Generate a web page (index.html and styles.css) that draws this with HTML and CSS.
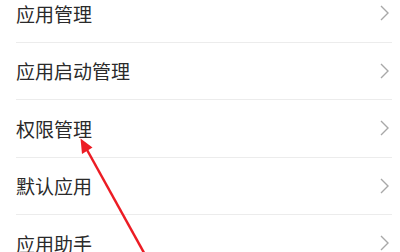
FILE: index.html
```html
<!DOCTYPE html>
<html lang="zh-CN">
<head>
<meta charset="utf-8">
<link rel="stylesheet" href="styles.css">
</head>
<body>
<ul class="list">
  <li class="row"><div class="row-inner"><span class="label">应用管理</span><svg class="chev" viewBox="0 0 9 16" width="9" height="16"><path d="M1 1 L8 8 L1 15" /></svg></div></li>
  <li class="row"><div class="row-inner"><span class="label">应用启动管理</span><svg class="chev" viewBox="0 0 9 16" width="9" height="16"><path d="M1 1 L8 8 L1 15" /></svg></div></li>
  <li class="row"><div class="row-inner"><span class="label">权限管理</span><svg class="chev" viewBox="0 0 9 16" width="9" height="16"><path d="M1 1 L8 8 L1 15" /></svg></div></li>
  <li class="row"><div class="row-inner"><span class="label">默认应用</span><svg class="chev" viewBox="0 0 9 16" width="9" height="16"><path d="M1 1 L8 8 L1 15" /></svg></div></li>
  <li class="row"><div class="row-inner"><span class="label">应用助手</span><svg class="chev" viewBox="0 0 9 16" width="9" height="16"><path d="M1 1 L8 8 L1 15" /></svg></div></li>
</ul>
<svg class="arrow" width="400" height="252" viewBox="0 0 400 252">
  <line x1="86" y1="148" x2="148" y2="260" />
  <polygon points="80.5,138.5 92.5,147.5 82,154" />
</svg>
</body>
</html>
```
FILE: styles.css
```css
html, body {
  margin: 0;
  padding: 0;
  background: #ffffff;
  width: 400px;
  height: 252px;
  overflow: hidden;
}
body {
  position: relative;
  font-family: "Noto Sans CJK SC", "Noto Sans", sans-serif;
}
.list {
  list-style: none;
  margin: -15px 0 0 0;
  padding: 0;
}
.row {
  padding-left: 16px;
  padding-right: 8px;
}
.row-inner {
  height: 57.5px;
  box-sizing: border-box;
  border-bottom: 1px solid #ececec;
  display: flex;
  align-items: center;
  justify-content: space-between;
  padding-right: 3px;
}
.label {
  font-size: 19px;
  color: #2a2a2a;
  line-height: 1;
}
.chev {
  fill: none;
  stroke: #a8a8a8;
  stroke-width: 1.4;
}
.arrow {
  position: absolute;
  left: 0;
  top: 0;
}
.arrow line {
  stroke: #ec1c24;
  stroke-width: 2.5;
}
.arrow polygon {
  fill: #ec1c24;
}
```
